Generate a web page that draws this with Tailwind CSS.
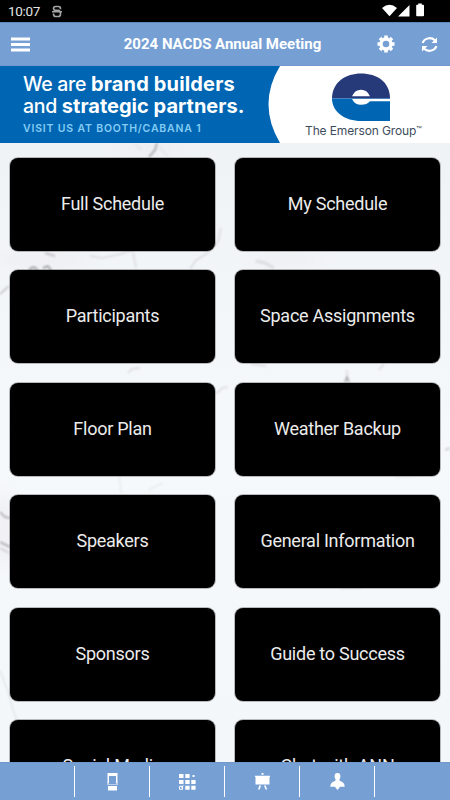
<!DOCTYPE html>
<html lang="en">
<head>
<meta charset="utf-8">
<meta name="viewport" content="width=device-width, initial-scale=1">
<title>2024 NACDS Annual Meeting</title>
<script src="https://cdn.jsdelivr.net/npm/@tailwindcss/browser@4"></script>
</head>
<body class="w-[450px] h-[800px] overflow-hidden flex flex-col font-[Roboto,sans-serif] bg-[#f3f6f9]">
<div class="h-[22px] shrink-0 bg-black flex items-center pl-[8px] pr-[25px] text-[#e4e4e4]">
  <span class="text-[13.500px] leading-[22px] w-[44px] tracking-[-0.300px]">10:07</span>
  <svg class="w-[10px] h-[13px]" viewBox="0 0 11 14" fill="none" stroke="#a5a5a5" stroke-width="1.800"><path d="M9.300 4.500V3.300Q9.300 1.500 7 1.500H4Q1.700 1.500 1.700 3.700Q1.700 5.600 4 5.600H7Q9.300 6 9.300 8.700V10Q9.300 12.500 7 12.500H4Q1.700 12.500 1.700 10V9.300M0 7.300H11"/></svg>
  <svg class="ml-auto w-[43px] h-[14px] relative -top-px" viewBox="382 3 43 14" fill="#fff"><path d="M382 8Q389.500 1.500 397 8L389.500 16.300ZM398 16.500L409.500 5V16.500ZM416.200 5.500Q416.200 4.800 417 4.800H418.200V3.500H421.800V4.800H423Q424 4.800 424 5.500V15.500Q424 16.300 423 16.300H417Q416.200 16.300 416.200 15.500Z"/></svg>
</div>
<header class="h-[44px] shrink-0 bg-[#769fd4] border-t border-[#5f88bb] border-b border-b-[#7299cf] flex items-center text-white pl-[11px] pr-[12px]">
  <svg class="w-[19px] h-[15px]" viewBox="0 0 19 15" fill="#fff"><path d="M0 .5h19v3H0zM0 6h19v3H0zM0 11.500h19v3H0z"/></svg>
  <h1 class="flex-1 pl-[38px] text-center text-[15px] font-bold whitespace-nowrap">2024 NACDS Annual Meeting</h1>
  <svg class="w-[18px] h-[18px] mr-[26px]" viewBox="-9 -9 18 18" fill="none" stroke="#fff"><circle r="5" stroke-width="3.400"/><path stroke-width="3.600" d="M0-8.500V-6M0 8.500V6M-8.500 0H-6M8.500 0H6M-6-6L-4.300-4.300M6-6L4.300-4.300M-6 6L-4.300 4.300M6 6L4.300 4.300"/></svg>
  <svg class="w-[17px] h-[17px]" viewBox="0 0 17 17" fill="none" stroke="#fff" stroke-width="2.200"><path d="M1.700 7A7 6 0 0 1 13.800 4.300M15.300 10A7 6 0 0 1 3.200 12.700"/><path fill="#fff" stroke="none" d="M16 1.500v5.500h-5.500zM1 15.500v-5.500h5.500z"/></svg>
</header>
<section class="relative h-[77px] shrink-0 bg-white overflow-hidden font-[Inter,sans-serif]">
  <svg class="absolute inset-0 w-[450px] h-[77px]" viewBox="0 66 450 77"><path fill="#0066b3" d="M0 66H280Q257 104 280 143H0Z"/><path fill="#263a7a" d="M332 98.500C332 82 346 73.500 361 73.500C377 73.500 390 82 390 98.500Z"/><path fill="#0066b3" d="M332 98.500H390V121H361C345 121 332 112 332 98.500Z"/><path fill="#fff" d="M352 96.200Q355 89.800 361 89.800T370 96.200ZM352 98.900H390V101.300H370Q367 104.800 361 104.800T352 98.900Z"/></svg>
  <div class="relative pl-[23px] pt-[7px] text-white whitespace-nowrap">
    <p class="text-[19.500px] leading-[22px] font-medium tracking-[-0.300px]">We are <b class="text-[20px] tracking-[0.150px]">brand builders</b></p>
    <p class="text-[19.500px] leading-[22px] font-medium tracking-[-0.300px]">and <b class="text-[20px] tracking-[0.010px]">strategic partners.</b></p>
    <p class="mt-[5px] text-[10.500px] leading-[14px] font-semibold tracking-[0.820px] text-[#84ccf5]">VISIT US AT BOOTH/CABANA 1</p>
  </div>
  <p class="absolute left-[305px] top-[56px] text-[12px] leading-[15px] text-[#3d4d5c] tracking-[-0.120px] whitespace-nowrap">The Emerson Group<span class="text-[9px] align-[2px]">™</span></p>
</section>
<main class="relative flex-1 min-h-0 overflow-hidden">
  <svg class="absolute inset-0 w-[450px] h-[620px]" viewBox="0 143 450 620" fill="none">
    <defs><linearGradient id="g" x2="0" y2="1"><stop stop-color="#f0f3f6"/><stop offset=".5" stop-color="#f6f9fc"/><stop offset="1" stop-color="#f4f7fa"/></linearGradient><filter id="b"><feGaussianBlur stdDeviation=".8"/></filter><filter id="c" x="-50%" y="-50%" width="200%" height="200%"><feGaussianBlur stdDeviation="7"/></filter></defs>
    <path fill="url(#g)" d="M0 143h450v620H0z"/>
    <g filter="url(#c)" fill="#ece9ed" opacity=".6"><ellipse cx="150" cy="148" rx="40" ry="6"/><ellipse cx="45" cy="260" rx="50" ry="7"/><ellipse cx="5" cy="530" rx="9" ry="40"/><ellipse cx="285" cy="260" rx="40" ry="6"/></g>
    <g filter="url(#b)" stroke="#c9c6cc" stroke-width="1.200" opacity=".65">
      <path stroke="#77747c" stroke-width="1.600" d="M157 143L155 150L149 157"/><path d="M158 146L168 156M135 144L142 150" stroke="#dddadf"/>
      <path d="M221 228L218 242L206 254L196 260L190 269M90 256L102 258L121 254L132 250M133 252L136 268" stroke="#cbc7cf" stroke-width="1.500"/>
      <path stroke="#55535a" stroke-width="1.400" d="M29 269L34 267L38 270M43 268L48 266L51 270"/><path d="M45 253L55 256M0 294L9 286" stroke="#97949c" stroke-width="1.400"/>
      <path d="M256 261L265 263L274 268" stroke-width="3" stroke="#d3d1d6"/>
      <path d="M128 373L132 369L140 368M216 394L222 388L228 387M347 370V380M251 364L266 366M384 364L379 370" stroke="#cac4ce" stroke-width="1.500"/>
      <path d="M345 382L347 377L349 382" stroke="#55535a"/><path d="M119 475L121 493M148 490L163 483M395 478L430 474" stroke="#d6d9de"/>
      <path d="M0 512L5 517L10 518M0 542L10 547" stroke="#77747c" stroke-width="1.400"/><path d="M445 450L450 448M0 548L9 553" stroke="#aaa4ae" stroke-width="1.400"/>
      <path d="M0 670L8 692L14 713L17 720M340 589L362 588" stroke="#cfd3d8"/>
    </g>
  </svg>
  <div class="relative grid grid-cols-2 gap-x-[20px] gap-y-[19.500px] px-[10px] pt-[14.500px] auto-rows-[93px] text-[18px] tracking-[-0.260px] text-[#ececec] *:bg-black *:rounded-[8px] *:shadow-[0_0_0_1px_rgba(0,0,0,0.250)] *:flex *:items-center *:justify-center *:pb-[1.500px]">
    <div>Full Schedule</div><div>My Schedule</div>
    <div>Participants</div><div>Space Assignments</div>
    <div>Floor Plan</div><div>Weather Backup</div>
    <div>Speakers</div><div>General Information</div>
    <div>Sponsors</div><div>Guide to Success</div>
    <div>Social Media</div><div>Chat with ANN</div>
  </div>
</main>
<nav class="h-[38px] shrink-0 bg-[#769fd4] border-t border-[#7098cb] grid grid-cols-6 items-center justify-items-center [&>div]:w-full [&>div]:h-[31px] [&>div]:flex [&>div]:items-center [&>div]:justify-center">
  <div class="border-r border-white"></div>
  <div class="border-r border-white"><svg class="w-[11px] h-[18px]" viewBox="0 0 11 18" fill="#fff"><path fill-rule="evenodd" d="M.5 0h10v11H.5ZM2 3v7.500h7V3ZM0 10.500h11v1H0ZM1 13h9v4.500H1Z"/></svg></div>
  <div class="border-r border-white"><svg class="w-[17px] h-[17px]" viewBox="0 0 17 17" fill="#fff"><path d="M0 1h4.500v4h-4.500zM6.300 1h4.300v4h-4.300zM13.500 2h2v2h-2zM0 7h4.500v4h-4.500zM6.300 7h4.300v4h-4.300zM12.300 7h4.300v4h-4.300zM6.300 12.800h4.300v4h-4.300zM12.300 12.800h4.300v4h-4.300z"/><path fill="none" stroke="#fff" d="M.5 16.300V13.300H3.500V16.300ZM2 14.500L4.500 12.500"/></svg></div>
  <div class="border-r border-white"><svg class="w-[15px] h-[17px]" viewBox="0 0 15 17" fill="#fff"><path d="M6.500 0h2v1.800h-2zM0 2.800h15v1.200h-.5v7.500H.5v-7.500H0zM4.300 12.500h1.800l-1.400 4H3zM9 12.500h1.800l1.300 4h-1.600z"/></svg></div>
  <div class="border-r border-white"><svg class="w-[15px] h-[17px]" viewBox="0 0 15 17" fill="#fff"><ellipse cx="7.500" cy="3.300" rx="2.900" ry="3.300"/><path d="M5.500 5.500h4v2l3.500 2q1.700 1.500 1.700 4.300h-4.800l-.7 1.200-1.700 2-1.700-2-.7-1.200H.3q0-2.800 1.700-4.300l3.500-2z"/></svg></div>
  <div></div>
</nav>
</body>
</html>
